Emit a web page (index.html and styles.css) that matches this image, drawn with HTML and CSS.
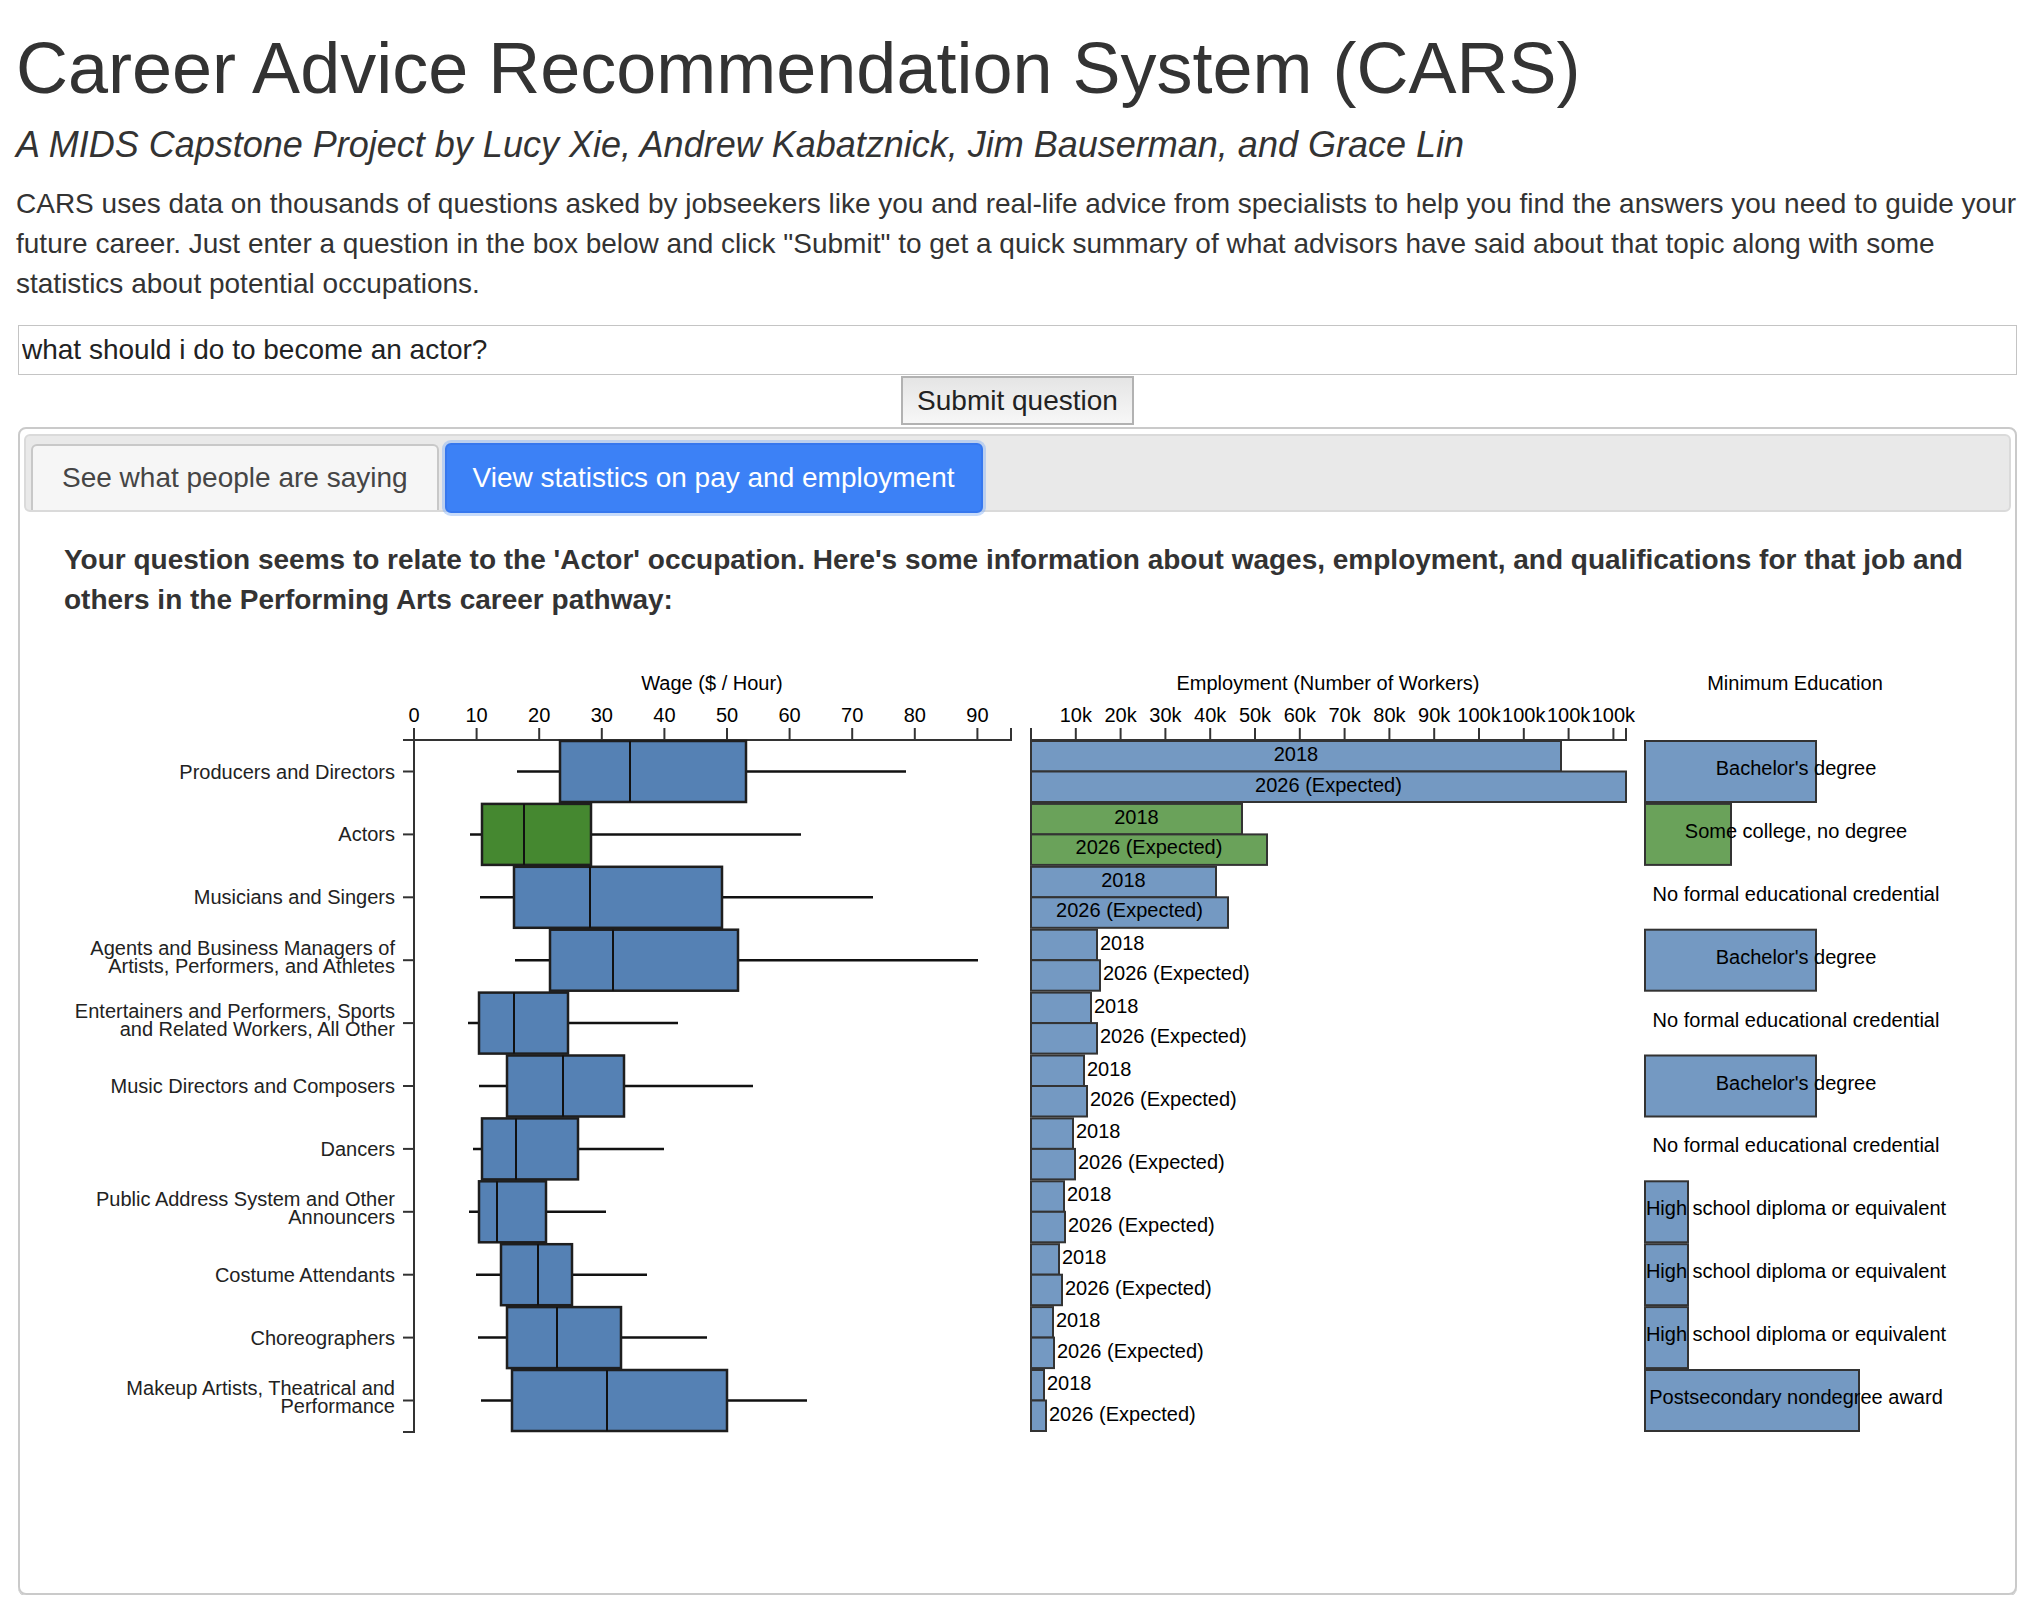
FILE: index.html
```html
<!DOCTYPE html>
<html>
<head>
<meta charset="utf-8">
<title>CARS</title>
<link rel="stylesheet" href="styles.css">
</head>
<body>
<div class="container">
  <h1 class="title">Career Advice Recommendation System (CARS)</h1>
  <h4 class="subtitle">A MIDS Capstone Project by Lucy Xie, Andrew Kabatznick, Jim Bauserman, and Grace Lin</h4>
  <p class="intro">CARS uses data on thousands of questions asked by jobseekers like you and real-life advice from specialists to help you find the answers you need to guide your future career. Just enter a question in the box below and click "Submit" to get a quick summary of what advisors have said about that topic along with some statistics about potential occupations.</p>
  <form class="ask">
    <input class="question" type="text" value="what should i do to become an actor?">
    <button class="submit" type="button">Submit question</button>
  </form>
  <div class="panel">
    <ul class="tabs">
      <li class="tab">See what people are saying</li>
      <li class="tab active">View statistics on pay and employment</li>
    </ul>
    <p class="lead">Your question seems to relate to the 'Actor' occupation. Here's some information about wages, employment, and qualifications for that job and others in the Performing Arts career pathway:</p>
    <svg class="chart" width="1987" height="949" viewBox="24 640 1987 949" xmlns="http://www.w3.org/2000/svg">
      <!-- titles -->
      <text class="ctitle" x="712" y="690">Wage ($ / Hour)</text>
      <text class="ctitle" x="1328" y="690">Employment (Number of Workers)</text>
      <text class="ctitle" x="1795" y="690">Minimum Education</text>

      <!-- wage axis -->
      <g class="axis">
        <path d="M414,728V740H1011V728"/>
        <line x1="414" y1="728" x2="414" y2="740"/>
        <line x1="476.6" y1="728" x2="476.6" y2="740"/>
        <line x1="539.2" y1="728" x2="539.2" y2="740"/>
        <line x1="601.8" y1="728" x2="601.8" y2="740"/>
        <line x1="664.4" y1="728" x2="664.4" y2="740"/>
        <line x1="727" y1="728" x2="727" y2="740"/>
        <line x1="789.6" y1="728" x2="789.6" y2="740"/>
        <line x1="852.2" y1="728" x2="852.2" y2="740"/>
        <line x1="914.8" y1="728" x2="914.8" y2="740"/>
        <line x1="977.4" y1="728" x2="977.4" y2="740"/>
        <text x="414" y="722">0</text>
        <text x="476.6" y="722">10</text>
        <text x="539.2" y="722">20</text>
        <text x="601.8" y="722">30</text>
        <text x="664.4" y="722">40</text>
        <text x="727" y="722">50</text>
        <text x="789.6" y="722">60</text>
        <text x="852.2" y="722">70</text>
        <text x="914.8" y="722">80</text>
        <text x="977.4" y="722">90</text>
      </g>

      <!-- y axis -->
      <g class="axis">
        <path d="M403,740H414V1432H403"/>
        <line x1="403" y1="771.5" x2="414" y2="771.5"/>
        <line x1="403" y1="834.4" x2="414" y2="834.4"/>
        <line x1="403" y1="897.3" x2="414" y2="897.3"/>
        <line x1="403" y1="960.2" x2="414" y2="960.2"/>
        <line x1="403" y1="1023.1" x2="414" y2="1023.1"/>
        <line x1="403" y1="1086" x2="414" y2="1086"/>
        <line x1="403" y1="1148.9" x2="414" y2="1148.9"/>
        <line x1="403" y1="1211.8" x2="414" y2="1211.8"/>
        <line x1="403" y1="1274.7" x2="414" y2="1274.7"/>
        <line x1="403" y1="1337.6" x2="414" y2="1337.6"/>
        <line x1="403" y1="1400.5" x2="414" y2="1400.5"/>
      </g>
      <g class="rowlabels">
        <text x="395" y="778.5">Producers and Directors</text>
        <text x="395" y="841.4">Actors</text>
        <text x="395" y="904.3">Musicians and Singers</text>
        <text x="395" y="954.7">Agents and Business Managers of</text>
        <text x="395" y="972.7">Artists, Performers, and Athletes</text>
        <text x="395" y="1017.6">Entertainers and Performers, Sports</text>
        <text x="395" y="1035.6">and Related Workers, All Other</text>
        <text x="395" y="1093">Music Directors and Composers</text>
        <text x="395" y="1155.9">Dancers</text>
        <text x="395" y="1206.3">Public Address System and Other</text>
        <text x="395" y="1224.3">Announcers</text>
        <text x="395" y="1281.7">Costume Attendants</text>
        <text x="395" y="1344.6">Choreographers</text>
        <text x="395" y="1395">Makeup Artists, Theatrical and</text>
        <text x="395" y="1413">Performance</text>
      </g>

      <!-- box plots -->
      <g class="boxes">
        <line class="whisker" x1="517" y1="771.5" x2="906" y2="771.5"/>
        <rect class="box" x="560" y="741" width="186" height="61"/>
        <line class="median" x1="630" y1="741" x2="630" y2="802"/>

        <line class="whisker" x1="470" y1="834.4" x2="801" y2="834.4"/>
        <rect class="box hl" x="482" y="803.9" width="109" height="61"/>
        <line class="median" x1="524" y1="803.9" x2="524" y2="864.9"/>

        <line class="whisker" x1="480" y1="897.3" x2="873" y2="897.3"/>
        <rect class="box" x="514" y="866.8" width="208" height="61"/>
        <line class="median" x1="590" y1="866.8" x2="590" y2="927.8"/>

        <line class="whisker" x1="515" y1="960.2" x2="978" y2="960.2"/>
        <rect class="box" x="550" y="929.7" width="188" height="61"/>
        <line class="median" x1="613" y1="929.7" x2="613" y2="990.7"/>

        <line class="whisker" x1="468" y1="1023.1" x2="678" y2="1023.1"/>
        <rect class="box" x="479" y="992.6" width="89" height="61"/>
        <line class="median" x1="514" y1="992.6" x2="514" y2="1053.6"/>

        <line class="whisker" x1="479" y1="1086" x2="753" y2="1086"/>
        <rect class="box" x="507" y="1055.5" width="117" height="61"/>
        <line class="median" x1="563" y1="1055.5" x2="563" y2="1116.5"/>

        <line class="whisker" x1="473" y1="1148.9" x2="664" y2="1148.9"/>
        <rect class="box" x="482" y="1118.4" width="96" height="61"/>
        <line class="median" x1="516" y1="1118.4" x2="516" y2="1179.4"/>

        <line class="whisker" x1="469" y1="1211.8" x2="606" y2="1211.8"/>
        <rect class="box" x="479" y="1181.3" width="67" height="61"/>
        <line class="median" x1="497" y1="1181.3" x2="497" y2="1242.3"/>

        <line class="whisker" x1="476" y1="1274.7" x2="647" y2="1274.7"/>
        <rect class="box" x="501" y="1244.2" width="71" height="61"/>
        <line class="median" x1="538" y1="1244.2" x2="538" y2="1305.2"/>

        <line class="whisker" x1="478" y1="1337.6" x2="707" y2="1337.6"/>
        <rect class="box" x="507" y="1307.1" width="114" height="61"/>
        <line class="median" x1="557" y1="1307.1" x2="557" y2="1368.1"/>

        <line class="whisker" x1="481" y1="1400.5" x2="807" y2="1400.5"/>
        <rect class="box" x="512" y="1370" width="215" height="61"/>
        <line class="median" x1="607" y1="1370" x2="607" y2="1431"/>
      </g>

      <!-- employment axis -->
      <g class="axis">
        <path d="M1031,728V740H1626V728"/>
        <line x1="1075.8" y1="728" x2="1075.8" y2="740"/>
        <line x1="1120.6" y1="728" x2="1120.6" y2="740"/>
        <line x1="1165.4" y1="728" x2="1165.4" y2="740"/>
        <line x1="1210.2" y1="728" x2="1210.2" y2="740"/>
        <line x1="1255" y1="728" x2="1255" y2="740"/>
        <line x1="1299.8" y1="728" x2="1299.8" y2="740"/>
        <line x1="1344.6" y1="728" x2="1344.6" y2="740"/>
        <line x1="1389.4" y1="728" x2="1389.4" y2="740"/>
        <line x1="1434.2" y1="728" x2="1434.2" y2="740"/>
        <line x1="1479" y1="728" x2="1479" y2="740"/>
        <line x1="1523.8" y1="728" x2="1523.8" y2="740"/>
        <line x1="1568.6" y1="728" x2="1568.6" y2="740"/>
        <line x1="1613.4" y1="728" x2="1613.4" y2="740"/>
        <text x="1075.8" y="722">10k</text>
        <text x="1120.6" y="722">20k</text>
        <text x="1165.4" y="722">30k</text>
        <text x="1210.2" y="722">40k</text>
        <text x="1255" y="722">50k</text>
        <text x="1299.8" y="722">60k</text>
        <text x="1344.6" y="722">70k</text>
        <text x="1389.4" y="722">80k</text>
        <text x="1434.2" y="722">90k</text>
        <text x="1479" y="722">100k</text>
        <text x="1523.8" y="722">100k</text>
        <text x="1568.6" y="722">100k</text>
        <text x="1613.4" y="722">100k</text>
      </g>

      <!-- employment bars -->
      <g class="bars">
        <rect class="bar" x="1031" y="741" width="530" height="30.5"/>
        <rect class="bar" x="1031" y="771.5" width="595" height="30.5"/>
        <rect class="bar hl" x="1031" y="803.9" width="211" height="30.5"/>
        <rect class="bar hl" x="1031" y="834.4" width="236" height="30.5"/>
        <rect class="bar" x="1031" y="866.8" width="185" height="30.5"/>
        <rect class="bar" x="1031" y="897.3" width="197" height="30.5"/>
        <rect class="bar" x="1031" y="929.7" width="66" height="30.5"/>
        <rect class="bar" x="1031" y="960.2" width="69" height="30.5"/>
        <rect class="bar" x="1031" y="992.6" width="60" height="30.5"/>
        <rect class="bar" x="1031" y="1023.1" width="66" height="30.5"/>
        <rect class="bar" x="1031" y="1055.5" width="53" height="30.5"/>
        <rect class="bar" x="1031" y="1086" width="56" height="30.5"/>
        <rect class="bar" x="1031" y="1118.4" width="42" height="30.5"/>
        <rect class="bar" x="1031" y="1148.9" width="44" height="30.5"/>
        <rect class="bar" x="1031" y="1181.3" width="33" height="30.5"/>
        <rect class="bar" x="1031" y="1211.8" width="34" height="30.5"/>
        <rect class="bar" x="1031" y="1244.2" width="28" height="30.5"/>
        <rect class="bar" x="1031" y="1274.7" width="31" height="30.5"/>
        <rect class="bar" x="1031" y="1307.1" width="22" height="30.5"/>
        <rect class="bar" x="1031" y="1337.6" width="23" height="30.5"/>
        <rect class="bar" x="1031" y="1370" width="13" height="30.5"/>
        <rect class="bar" x="1031" y="1400.5" width="15" height="30.5"/>
      </g>
      <g class="barlabels">
        <text class="mid" x="1296" y="761">2018</text>
        <text class="mid" x="1328.5" y="791.5">2026 (Expected)</text>
        <text class="mid" x="1136.5" y="823.9">2018</text>
        <text class="mid" x="1149" y="854.4">2026 (Expected)</text>
        <text class="mid" x="1123.5" y="886.8">2018</text>
        <text class="mid" x="1129.5" y="917.3">2026 (Expected)</text>
        <text x="1100" y="949.7">2018</text>
        <text x="1103" y="980.2">2026 (Expected)</text>
        <text x="1094" y="1012.6">2018</text>
        <text x="1100" y="1043.1">2026 (Expected)</text>
        <text x="1087" y="1075.5">2018</text>
        <text x="1090" y="1106">2026 (Expected)</text>
        <text x="1076" y="1138.4">2018</text>
        <text x="1078" y="1168.9">2026 (Expected)</text>
        <text x="1067" y="1201.3">2018</text>
        <text x="1068" y="1231.8">2026 (Expected)</text>
        <text x="1062" y="1264.2">2018</text>
        <text x="1065" y="1294.7">2026 (Expected)</text>
        <text x="1056" y="1327.1">2018</text>
        <text x="1057" y="1357.6">2026 (Expected)</text>
        <text x="1047" y="1390">2018</text>
        <text x="1049" y="1420.5">2026 (Expected)</text>
      </g>

      <!-- education -->
      <g class="bars">
        <rect class="bar" x="1645" y="741" width="171" height="61"/>
        <rect class="bar hl" x="1645" y="803.9" width="86" height="61"/>
        <rect class="bar" x="1645" y="929.7" width="171" height="61"/>
        <rect class="bar" x="1645" y="1055.5" width="171" height="61"/>
        <rect class="bar" x="1645" y="1181.3" width="43" height="61"/>
        <rect class="bar" x="1645" y="1244.2" width="43" height="61"/>
        <rect class="bar" x="1645" y="1307.1" width="43" height="61"/>
        <rect class="bar" x="1645" y="1370" width="214" height="61"/>
      </g>
      <g class="edulabels">
        <text x="1796" y="775">Bachelor's degree</text>
        <text x="1796" y="837.9">Some college, no degree</text>
        <text x="1796" y="900.8">No formal educational credential</text>
        <text x="1796" y="963.7">Bachelor's degree</text>
        <text x="1796" y="1026.6">No formal educational credential</text>
        <text x="1796" y="1089.5">Bachelor's degree</text>
        <text x="1796" y="1152.4">No formal educational credential</text>
        <text x="1796" y="1215.3">High school diploma or equivalent</text>
        <text x="1796" y="1278.2">High school diploma or equivalent</text>
        <text x="1796" y="1341.1">High school diploma or equivalent</text>
        <text x="1796" y="1404">Postsecondary nondegree award</text>
      </g>
    </svg>
  </div>
</div>
</body>
</html>
```

FILE: styles.css
```css
html, body {
  margin: 0;
  padding: 0;
  background: #fff;
}

body {
  font-family: "Liberation Sans", Helvetica, Arial, sans-serif;
  color: #333;
  font-size: 28px;
  line-height: 40px;
}

.container {
  padding: 0 18px 0 16px;
}

.title {
  margin: 29px 0 0;
  font-size: 72px;
  line-height: 79px;
  font-weight: normal;
}

.subtitle {
  margin: 17px 0 0;
  font-size: 36px;
  line-height: 40px;
  font-style: italic;
  font-weight: normal;
}

.intro {
  margin: 19px 0 0;
}

.ask {
  margin: 21px 3px 0 2px;
  display: flex;
  flex-direction: column;
  align-items: center;
}

.question {
  box-sizing: border-box;
  width: 100%;
  height: 50px;
  margin: 0;
  border: 1px solid #c4c4c4;
  padding: 0 3px;
  font-family: inherit;
  font-size: 28px;
  color: #222;
  background: #fff;
}

.submit {
  box-sizing: border-box;
  margin: 1px 0 0;
  height: 49px;
  padding: 0 14px;
  border: 2px solid #b2b2b2;
  border-radius: 0;
  background: linear-gradient(#e5e5e5, #f7f7f7);
  font-family: inherit;
  font-size: 28px;
  line-height: 40px;
  color: #222;
}

.panel {
  margin: 2px 3px 0 2px;
  border: 2px solid #cacaca;
  border-radius: 8px;
  padding: 5px 4px 4px;
  box-shadow: 0 1px 0 #c4c4c4;
}

.tabs {
  list-style: none;
  margin: 0;
  height: 78px;
  box-sizing: border-box;
  padding: 8px 5px 0 5px;
  display: flex;
  align-items: flex-end;
  gap: 6px;
  background: #e9e9e9;
  border: 2px solid #dadada;
  border-radius: 6px;
}

.tab {
  padding: 12px 29px;
  border: 2px solid #c8c8c8;
  border-bottom: none;
  border-radius: 6px 6px 0 0;
  background: #f6f6f6;
  color: #454545;
  white-space: nowrap;
}

.tab.active {
  padding: 13px 26px;
  margin-bottom: -3px;
  border: 2px solid #3677ee;
  border-radius: 6px;
  background: #3c81f6;
  color: #fff;
  box-shadow: 0 0 0 3px rgba(130, 175, 245, 0.45);
}

.lead {
  margin: 28px 38px 0 40px;
  font-weight: bold;
}

.chart {
  display: block;
  margin-top: 20px;
}

.chart text {
  font-family: "Liberation Sans", Helvetica, Arial, sans-serif;
  font-size: 20px;
  fill: #000;
}

.chart .ctitle {
  text-anchor: middle;
}

.axis path,
.axis line {
  fill: none;
  stroke: #333;
  stroke-width: 2;
}

.axis text {
  text-anchor: middle;
}

.rowlabels text {
  text-anchor: end;
  fill: #222;
}

.whisker {
  stroke: #111;
  stroke-width: 2.5;
}

.box {
  fill: #5581b4;
  stroke: #1e1e1e;
  stroke-width: 2.5;
}

.box.hl {
  fill: #458830;
}

.median {
  stroke: #111;
  stroke-width: 2;
}

.bar {
  fill: #7499c2;
  stroke: #333;
  stroke-width: 2;
}

.bar.hl {
  fill: #6aa25a;
}

.barlabels .mid {
  text-anchor: middle;
}

.edulabels text {
  text-anchor: middle;
}
```
